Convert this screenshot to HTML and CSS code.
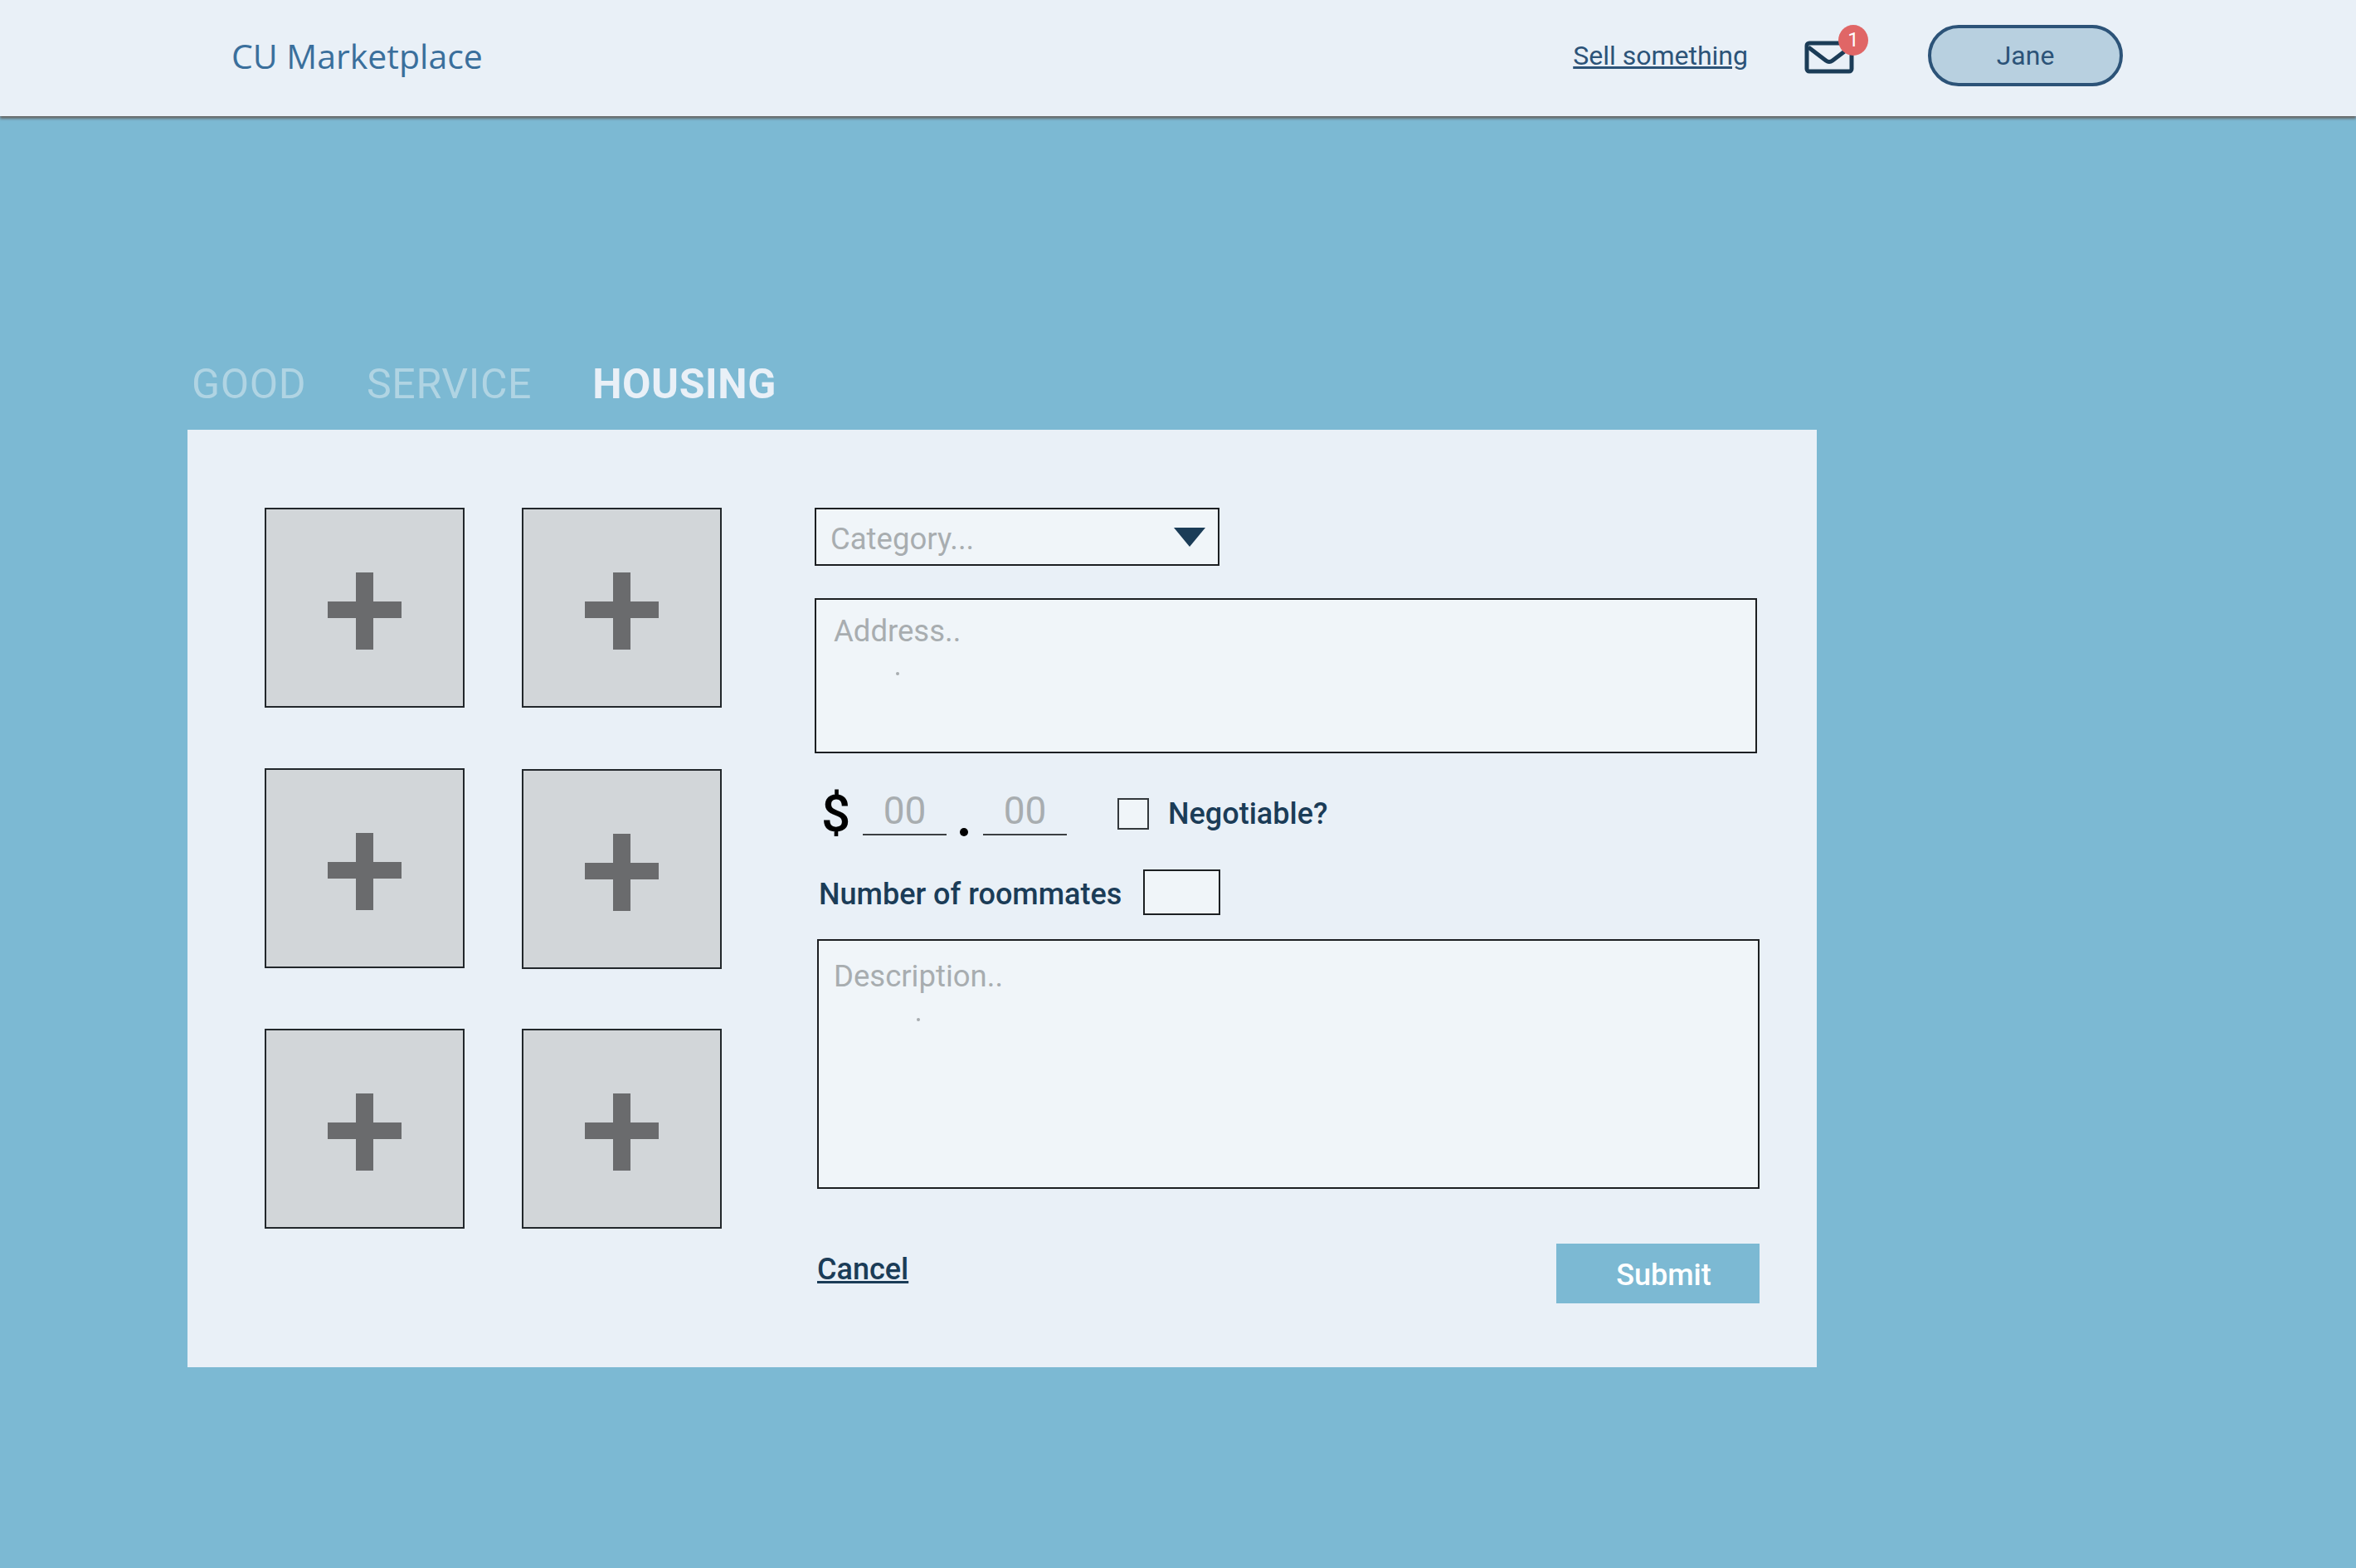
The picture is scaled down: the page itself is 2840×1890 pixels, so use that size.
FILE: index.html
```html
<!DOCTYPE html>
<html lang="en">
<head>
  <meta charset="UTF-8" />
  <title>CU Marketplace</title>
  <link rel="stylesheet" href="styles.css">
</head>
<body>
  <header class="topbar">
    <a class="logo" href="#">CU Marketplace</a>
    <nav class="topnav">
      <a class="sell" href="#">Sell something</a>
      <a class="mail" href="#">
        <svg class="mail-icon" viewBox="0 0 60 40" width="60" height="40">
          <rect x="3" y="3" width="54" height="34" rx="3" fill="none" stroke="#1b3c57" stroke-width="5" />
          <path d="M5 8 L26 24 Q30 27 34 24 L55 8" fill="none" stroke="#1b3c57" stroke-width="5" />
        </svg>
        <span class="badge">1</span>
      </a>
      <button class="user-btn">Jane</button>
    </nav>
  </header>

  <main>
    <div class="tabs">
      <a class="tab" href="#">GOOD</a>
      <a class="tab" href="#">SERVICE</a>
      <a class="tab active" href="#">HOUSING</a>
    </div>

    <section class="card">
      <div class="photos">
        <div class="photo"><span class="plus"></span></div>
        <div class="photo"><span class="plus"></span></div>
        <div class="photo"><span class="plus"></span></div>
        <div class="photo"><span class="plus"></span></div>
        <div class="photo"><span class="plus"></span></div>
        <div class="photo"><span class="plus"></span></div>
      </div>

      <form class="listing">
        <div class="field select">
          <span class="hint">Category...</span>
          <svg class="caret" viewBox="0 0 38 23" width="38" height="23"><path d="M0 0 H38 L19 23 Z" fill="#1b3c57" /></svg>
        </div>

        <div class="field area address">
          <span class="hint">Address..</span>
          <span class="speck speck-address"></span>
        </div>

        <div class="price-row">
          <span class="dollar">$</span>
          <span class="amount">00</span>
          <span class="point"></span>
          <span class="amount">00</span>
          <span class="checkbox"></span>
          <span class="label">Negotiable?</span>
        </div>

        <div class="room-row">
          <span class="label">Number of roommates</span>
          <span class="field room-count"></span>
        </div>

        <div class="field area description">
          <span class="hint">Description..</span>
          <span class="speck speck-description"></span>
        </div>

        <div class="actions">
          <a class="cancel" href="#">Cancel</a>
          <button class="submit" type="button">Submit</button>
        </div>
      </form>
    </section>
  </main>
</body>
</html>
```

FILE: styles.css
```css
* {
  margin: 0;
  padding: 0;
  box-sizing: border-box;
}
:root {
  --page: #7cb9d3;
  --card: #e9f0f7;
  --input: #f0f5f9;
  --navy: #1b3c57;
  --link: #2c5378;
  --hint: #a8adb0;
}
body {
  background: var(--page);
  font-family: 'Roboto', sans-serif;
  color: var(--navy);
  min-height: 100vh;
}
a {
  color: inherit;
}

/* top bar */
.topbar {
  height: 140px;
  background: var(--card);
  box-shadow: 0 3px 3px #666;
  display: flex;
  align-items: center;
  justify-content: space-between;
  padding: 0 281px 7px 279px;
}
.logo {
  font-family: 'Open Sans', sans-serif;
  font-size: 41px;
  color: #3a6f9c;
  text-decoration: none;
}
.topnav {
  display: flex;
  align-items: center;
}
.sell {
  font-size: 32px;
  color: var(--link);
  margin-right: 68px;
}
.mail {
  position: relative;
  display: block;
  width: 60px;
  height: 40px;
  margin-top: 5px;
  margin-right: 89px;
}
.mail-icon {
  display: block;
}
.badge {
  position: absolute;
  left: 41px;
  top: -19px;
  width: 36px;
  height: 37px;
  border-radius: 50%;
  background: #e06666;
  color: #fff;
  font-size: 24px;
  line-height: 37px;
  text-align: center;
}
.user-btn {
  width: 235px;
  height: 74px;
  border: 4px solid var(--link);
  border-radius: 37px;
  background: #b8d0e0;
  color: var(--link);
  font-family: inherit;
  font-size: 32px;
}

/* tabs */
main {
  padding: 294px 0 0 226px;
}
.tabs {
  display: flex;
  gap: 73px;
  padding-left: 5px;
  height: 84px;
}
.tab {
  font-size: 50px;
  line-height: 58px;
  letter-spacing: 0.6px;
  color: #b0d4e3;
  text-decoration: none;
}
.tab.active {
  color: var(--card);
  font-weight: 700;
}

/* card */
.card {
  width: 1964px;
  height: 1130px;
  background: var(--card);
  padding: 94px 0 0 93px;
  display: flex;
  gap: 112px;
}
.photos {
  display: grid;
  grid-template-columns: 241px 241px;
  grid-auto-rows: 241px;
  column-gap: 69px;
  row-gap: 73px;
  align-content: start;
}
.photo {
  background: #d2d6d9;
  border: 2px solid #22272b;
  display: flex;
  align-items: center;
  justify-content: center;
}
.photo:nth-child(4) {
  transform: translateY(1px);
}
.plus {
  position: relative;
  display: block;
  width: 89px;
  height: 93px;
  margin-top: 8px;
}
.plus::before,
.plus::after {
  content: "";
  position: absolute;
  background: #6a6b6d;
}
.plus::before {
  left: 0;
  top: 35px;
  width: 89px;
  height: 20px;
}
.plus::after {
  left: 34px;
  top: 0;
  width: 21px;
  height: 93px;
}

/* form */
.listing {
  width: 1140px;
  display: flex;
  flex-direction: column;
}
.field {
  background: var(--input);
  border: 2px solid #1c1f22;
}
.hint {
  color: var(--hint);
  font-size: 36.5px;
  line-height: 42px;
}
.select {
  width: 488px;
  height: 70px;
  display: flex;
  align-items: center;
  justify-content: space-between;
  padding: 0 15px 0 17px;
}
.select .hint {
  margin-top: 6px;
}
.area {
  position: relative;
}
.address {
  width: 1136px;
  height: 187px;
  margin-top: 39px;
  padding: 17px 0 0 21px;
}
.speck {
  position: absolute;
  width: 4px;
  height: 4px;
  border-radius: 50%;
  background: var(--hint);
}
.speck-address {
  left: 96px;
  top: 87px;
}
.speck-description {
  left: 118px;
  top: 93px;
}
.price-row {
  display: flex;
  align-items: center;
  height: 56px;
  margin-top: 45px;
  padding-left: 8px;
}
.dollar {
  color: #000;
  font-size: 62px;
  font-weight: 500;
  line-height: 56px;
  width: 50px;
}
.amount {
  width: 101px;
  height: 54px;
  padding-top: 1px;
  border-bottom: 2px solid #3c3f42;
  align-self: flex-start;
  text-align: center;
  color: var(--hint);
  font-size: 46px;
  line-height: 46px;
}
.point {
  width: 10px;
  height: 10px;
  border-radius: 50%;
  background: #000;
  margin: 44px 18px 0 16px;
}
.checkbox {
  width: 38px;
  height: 38px;
  background: var(--input);
  border: 2px solid #33383c;
  margin: 0 23px 0 61px;
}
.label {
  font-size: 36px;
  font-weight: 500;
}
.room-row {
  display: flex;
  align-items: center;
  height: 55px;
  margin-top: 39px;
  padding-left: 5px;
}
.room-row .label {
  margin-top: 5px;
}
.room-count {
  width: 93px;
  height: 55px;
  margin-left: 26px;
}
.description {
  width: 1136px;
  height: 301px;
  margin: 29px 0 0 3px;
  padding: 22px 0 0 18px;
}
.actions {
  display: flex;
  justify-content: space-between;
  width: 1136px;
  margin: 66px 0 0 3px;
}
.cancel {
  font-size: 36px;
  font-weight: 500;
  line-height: 42px;
  margin-top: 10px;
}
.submit {
  width: 245px;
  height: 72px;
  border: none;
  background: var(--page);
  color: #fff;
  font-family: inherit;
  font-size: 36px;
  font-weight: 500;
  padding: 3px 0 0 14px;
}
```
